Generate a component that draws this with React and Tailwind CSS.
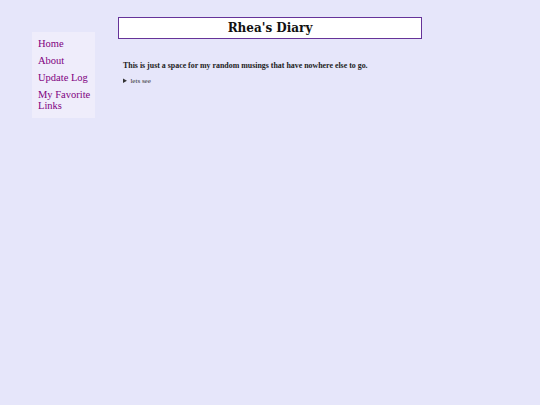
import React from 'react';

const links = ["Home", "About", "Update Log", "My Favorite Links"];

const App = () => {
  return (
    <div className="min-h-screen bg-[#e6e6fa] flex font-['Liberation_Serif',serif] text-[#222]">
      {/* Sidebar */}
      <div className="w-[118px] shrink-0 pl-[32px] pt-[32px]">
        <nav className="w-[63px] bg-[#efedfb] pt-[6px] pb-[7px] pl-[6px] pr-[2px] flex flex-col gap-[6px]">
          {links.map((link) => (
            <a key={link} href="#" className="text-[10.5px] leading-[11px] text-[#800080]">
              {link}
            </a>
          ))}
        </nav>
      </div>

      {/* Main */}
      <main className="w-[304px] shrink-0 pt-[17px]">
        <div className="h-[22px] border border-[#663399] bg-white text-center">
          <h1 className="font-['DejaVu_Serif',serif] font-bold text-[12px] leading-[20px] text-[#111]">
            Rhea's Diary
          </h1>
        </div>

        <p className="mt-[22px] pl-[5px] font-bold text-[7.9px] leading-[9px]">
          This is just a space for my random musings that have nowhere else to go.
        </p>

        <details className="mt-[7px] pl-[5px] text-[7px] leading-[8px] text-[#333]">
          <summary className="cursor-pointer">lets see</summary>
        </details>
      </main>
    </div>
  );
};

export default App;
